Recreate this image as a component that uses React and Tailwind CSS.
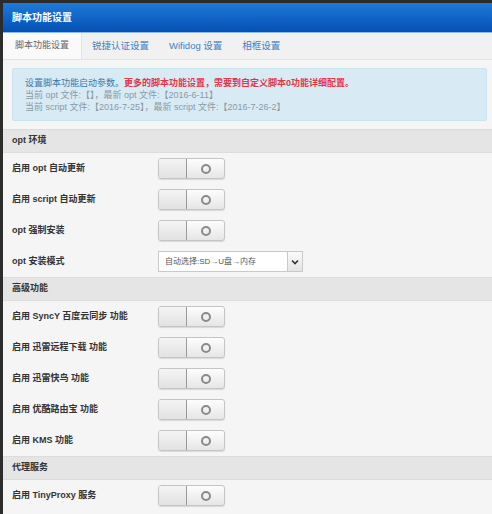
import React from "react";

const FONT = { fontFamily: '"Liberation Sans", "Noto Sans CJK SC", sans-serif' };

const sections = [
  {
    title: "opt 环境",
    rows: [
      { label: "启用 opt 自动更新" },
      { label: "启用 script 自动更新" },
      { label: "opt 强制安装" },
      { label: "opt 安装模式", select: "自动选择:SD→U盘→内存" },
    ],
  },
  {
    title: "高级功能",
    rows: [
      { label: "启用 SyncY 百度云同步 功能" },
      { label: "启用 迅雷远程下载 功能" },
      { label: "启用 迅雷快鸟 功能" },
      { label: "启用 优酷路由宝 功能" },
      { label: "启用 KMS 功能" },
    ],
  },
  {
    title: "代理服务",
    rows: [{ label: "启用 TinyProxy 服务" }],
  },
];

const tabs = ["脚本功能设置", "锐捷认证设置", "Wifidog 设置", "相框设置"];

function Toggle() {
  return (
    <div className="flex h-[21px] w-[67px] overflow-hidden rounded-[3px] border border-[#c4c4c4] bg-gradient-to-b from-[#fdfdfd] to-[#e6e6e6] shadow-[0_1px_1px_rgba(0,0,0,0.12)]">
      <div className="w-[28px] border-r border-[#9a9a9a] bg-gradient-to-b from-[#f4f4f4] to-[#e2e2e2]" />
      <div className="flex flex-1 items-center justify-center">
        <div className="h-[10px] w-[10px] rounded-full border-2 border-[#8a8a8a]" />
      </div>
    </div>
  );
}

function Select({ value }) {
  return (
    <div className="flex h-[21px] items-stretch">
      <div className="flex w-[130px] items-center border border-[#c9c9c9] bg-white pl-[6px] text-[8px] text-[#555]">
        {value}
      </div>
      <div className="flex w-[15px] items-center justify-center border border-l-0 border-[#c9c9c9] bg-gradient-to-b from-[#fafafa] to-[#e4e4e4]">
        <svg width="8" height="6" viewBox="0 0 8 6">
          <path d="M1 1.5 L4 4.5 L7 1.5" fill="none" stroke="#333" strokeWidth="1.6" />
        </svg>
      </div>
    </div>
  );
}

export default function App() {
  return (
    <div className="h-[514px] w-[492px] overflow-hidden bg-[#2c2c2c] pt-[3px]" style={FONT}>
      <div className="ml-[3px] h-full bg-[#f5f5f5]">
        <div className="flex h-[30px] items-center border-b border-[#8fb9ea] bg-gradient-to-b from-[#1f7ad6] to-[#0450b5] pl-[9px] text-[10px] font-bold text-white">
          脚本功能设置
        </div>
        <div className="flex h-[27px] border-b border-[#e4e4e4] bg-[#f1f1f1]">
          {tabs.map((t, i) => (
            <div
              key={t}
              className={
                i === 0
                  ? "flex items-center border-r border-[#e2e2e2] bg-[#fafafa] px-[12px] text-[9px] text-[#666]"
                  : "flex items-center px-[10px] text-[9.5px] text-[#3d82c4]"
              }
            >
              {t}
            </div>
          ))}
        </div>
        <div className="pb-[8px] pl-[9px] pr-[5px] pt-[8px]">
          <div className="rounded-[2px] border border-[#c8e4ef] bg-[#d8ebf5] px-[12px] pb-[7px] pt-[8px] text-[9px] leading-[12px] text-[#8a9aa5]">
            <div>
              <span className="text-[#3a7aa8]">设置脚本功能启动参数。</span>
              <span className="font-bold text-[#e0364a]">更多的脚本功能设置，需要到自定义脚本0功能详细配置。</span>
            </div>
            <div>当前 opt 文件:【】，最新 opt 文件:【2016-6-11】</div>
            <div>当前 script 文件:【2016-7-25】，最新 script 文件:【2016-7-26-2】</div>
          </div>
        </div>
        {sections.map((s) => (
          <div key={s.title}>
            <div className="flex h-[24px] items-center border-y border-[#dcdcdc] bg-[#e5e5e5] pl-[9px] text-[9px] font-bold text-[#333]">
              {s.title}
            </div>
            <div>
              {s.rows.map((r) => (
                <div key={r.label} className="flex h-[31px] items-center">
                  <div className="w-[155px] pl-[9px] text-[9px] font-bold text-[#333]">{r.label}</div>
                  {r.select ? <Select value={r.select} /> : <Toggle />}
                </div>
              ))}
            </div>
          </div>
        ))}
      </div>
    </div>
  );
}
